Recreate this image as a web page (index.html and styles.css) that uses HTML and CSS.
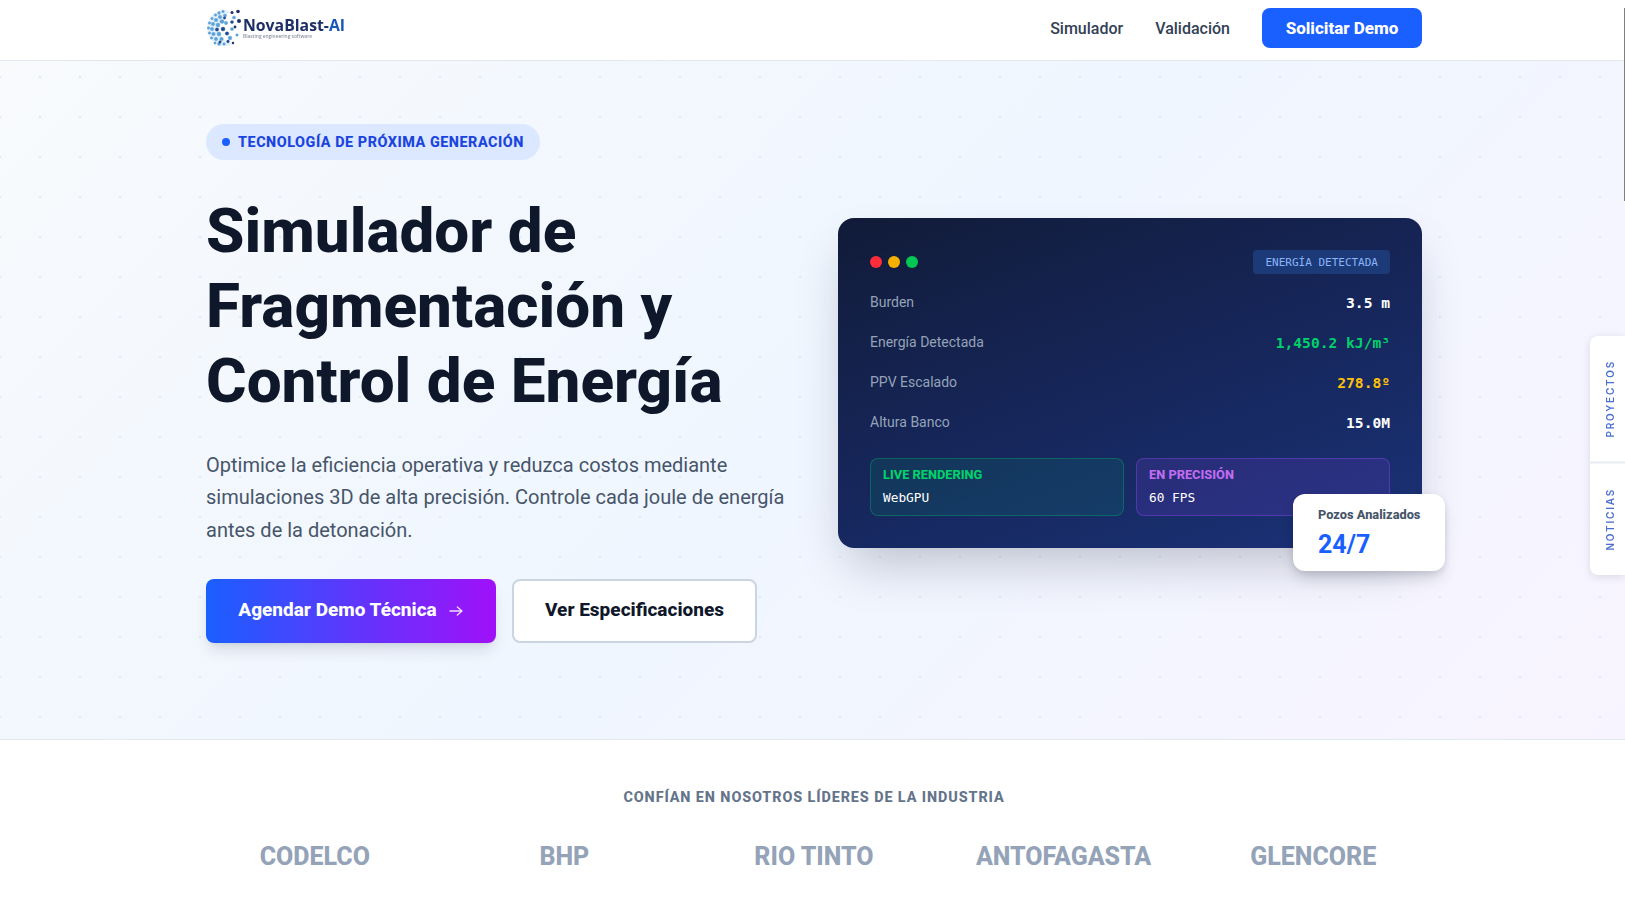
FILE: index.html
```html
<!DOCTYPE html>
<html lang="es">
<head>
<meta charset="utf-8">
<title>NovaBlast-AI</title>
<link rel="stylesheet" href="styles.css">
</head>
<body>
<header class="nav">
  <div class="wrap nav-inner">
    <a class="logo" href="#">
      <svg class="globe" viewBox="0 0 38 38" width="38" height="38" aria-hidden="true">
        <path class="globe-haze" d="M19 1C9 1 1 9 1 19s8 18 18 18c4 0 6-1 8-2-8-2-14-9-14-16S17 6 25 3c-2-1-4-2-6-2z"/>
        <g class="dots-mid">
          <circle cx="13" cy="4" r="1.4"/><circle cx="17" cy="2.5" r="1.3"/><circle cx="9.5" cy="6" r="1.3"/><circle cx="14" cy="8" r="1.8"/><circle cx="19" cy="6.5" r="1.6"/>
          <circle cx="6" cy="9.5" r="1.3"/><circle cx="10" cy="11" r="1.8"/><circle cx="16" cy="12.5" r="2.1"/><circle cx="3.5" cy="14" r="1.3"/><circle cx="7" cy="15" r="1.8"/>
          <circle cx="12" cy="16" r="2"/><circle cx="2.5" cy="19" r="1.3"/><circle cx="6" cy="20" r="1.7"/><circle cx="3.5" cy="24" r="1.3"/><circle cx="7.5" cy="25" r="1.8"/>
          <circle cx="13" cy="25" r="2"/><circle cx="5.5" cy="29" r="1.3"/><circle cx="10" cy="30" r="1.7"/><circle cx="15.5" cy="30" r="1.8"/><circle cx="9" cy="34" r="1.2"/>
          <circle cx="13" cy="35" r="1.5"/><circle cx="18" cy="35" r="1.3"/><circle cx="24" cy="29" r="1.9"/><circle cx="31" cy="26" r="1.3"/><circle cx="20" cy="14" r="1.7"/>
          <circle cx="28" cy="8.5" r="1.6"/><circle cx="26" cy="20" r="1.6"/>
        </g>
        <g class="dots-deep">
          <circle cx="11" cy="20.5" r="1.7"/><circle cx="17" cy="20" r="2"/><circle cx="21" cy="24.5" r="1.8"/><circle cx="18.5" cy="9" r="1.3"/><circle cx="22" cy="32.5" r="1.4"/>
          <circle cx="14" cy="33" r="1.3"/><circle cx="26" cy="13" r="1.6"/>
        </g>
        <g class="dots-navy">
          <circle cx="26" cy="3.5" r="1.5"/><circle cx="32" cy="2.5" r="1.8"/><circle cx="33" cy="12" r="2"/><circle cx="29" cy="18" r="1.4"/><circle cx="27" cy="34" r="1.2"/>
        </g>
      </svg>
      <span class="logo-text">
        <span class="logo-name">NovaBlast-<b>AI</b></span>
        <span class="logo-tag">Blasting engineering software</span>
      </span>
    </a>
    <nav class="nav-links">
      <a href="#">Simulador</a>
      <a href="#">Validación</a>
      <a class="nav-cta" href="#">Solicitar Demo</a>
    </nav>
  </div>
</header>

<main>
  <section class="hero">
    <div class="wrap hero-grid">
      <div class="hero-copy">
        <div class="badge"><span class="badge-dot"></span>TECNOLOGÍA DE PRÓXIMA GENERACIÓN</div>
        <h1>Simulador de Fragmentación y Control de Energía</h1>
        <p class="lead">Optimice la eficiencia operativa y reduzca costos mediante simulaciones 3D de alta precisión. Controle cada joule de energía antes de la detonación.</p>
        <div class="actions">
          <a class="btn btn-primary" href="#">Agendar Demo Técnica
            <svg viewBox="0 0 24 24" width="16" height="16" fill="none" stroke="currentColor" stroke-width="2" stroke-linecap="round" stroke-linejoin="round" aria-hidden="true"><path d="M3 12h18M14 6l7 6-7 6"/></svg>
          </a>
          <a class="btn btn-outline" href="#">Ver Especificaciones</a>
        </div>
      </div>
      <div class="panel-holder">
        <div class="panel">
          <div class="panel-top">
            <div class="lights"><i class="red"></i><i class="amber"></i><i class="green"></i></div>
            <span class="panel-tag">ENERGÍA DETECTADA</span>
          </div>
          <dl class="stats">
            <div class="stat"><dt>Burden</dt><dd>3.5 m</dd></div>
            <div class="stat"><dt>Energía Detectada</dt><dd class="v-green">1,450.2 kJ/m³</dd></div>
            <div class="stat"><dt>PPV Escalado</dt><dd class="v-amber">278.8º</dd></div>
            <div class="stat"><dt>Altura Banco</dt><dd>15.0M</dd></div>
          </dl>
          <div class="chips">
            <div class="chip chip-green"><strong>LIVE RENDERING</strong><span>WebGPU</span></div>
            <div class="chip chip-purple"><strong>EN PRECISIÓN</strong><span>60 FPS</span></div>
          </div>
        </div>
        <div class="float-card">
          <span class="float-label">Pozos Analizados</span>
          <span class="float-value">24/7</span>
        </div>
      </div>
    </div>
  </section>

  <section class="trust">
    <h2 class="wrap">CONFÍAN EN NOSOTROS LÍDERES DE LA INDUSTRIA</h2>
    <div class="wrap trust-grid">
      <span>CODELCO</span><span>BHP</span><span>RIO TINTO</span><span>ANTOFAGASTA</span><span>GLENCORE</span>
    </div>
  </section>
</main>

<aside class="side-tabs">
  <a href="#">PROYECTOS</a>
  <a href="#">NOTICIAS</a>
</aside>
<div class="scroll-thumb"></div>
</body>
</html>
```
FILE: styles.css
```css
* { box-sizing: border-box; }
html, body { margin: 0; padding: 0; height: 100%; overflow: hidden; }
body { font-family: Roboto, "Liberation Sans", sans-serif; color: #0f172a; background: #fff; }
a { text-decoration: none; color: inherit; }

.wrap { width: 1216px; margin-left: 206px; }

.nav { height: 61px; background: #fff; border-bottom: 1px solid #e2e8f0; }
.nav-inner { height: 60px; padding-bottom: 4px; display: flex; align-items: center; justify-content: space-between; }
.logo { display: flex; align-items: center; margin-top: -1px; }
.globe { display: block; filter: blur(.35px); }
.globe-haze { fill: #a9cdea; opacity: .3; }
.dots-mid { fill: #5aa2d8; stroke: #5aa2d8; stroke-width: .4; }
.dots-deep { fill: #1e4a96; stroke: #1e4a96; stroke-width: .3; }
.dots-navy { fill: #1d2f66; }
.logo-text { display: flex; flex-direction: column; margin-left: -1px; filter: blur(.25px); }
.logo-name { font-family: "Open Sans", sans-serif; font-size: 15.8px; font-weight: 700; color: #1d2f66; line-height: 17px; }
.logo-name b { font-weight: 700; color: #1a56b8; }
.logo-tag { font-family: "Open Sans", sans-serif; font-size: 4.8px; font-weight: 600; color: #8a93a3; line-height: 5px; }

.nav-links { display: flex; align-items: center; gap: 32px; font-size: 16px; font-weight: 500; color: #334155; }
.nav-cta { width: 160px; height: 40px; display: flex; align-items: center; justify-content: center; border-radius: 8px; background: #1a5fff; color: #fff; font-size: 17px; font-weight: 800; }

.hero {
  height: 679px;
  border-bottom: 1px solid #e2e8f0;
  background:
    radial-gradient(circle, #e2e8f0 1px, transparent 1.2px) -20px -4px / 40px 40px,
    linear-gradient(135deg, #f8fafc 0%, #eff6ff 50%, #f8f4ff 100%);
}
.hero-grid { display: grid; grid-template-columns: minmax(0, 1fr) 584px; column-gap: 48px; align-items: start; }
.hero-copy { padding-top: 63px; }
.badge { display: inline-flex; align-items: center; height: 36px; padding: 0 16px; border-radius: 18px; background: #dbe8ff; color: #1a44e0; font-size: 14.4px; font-weight: 800; letter-spacing: .53px; }
.badge-dot { width: 8px; height: 8px; border-radius: 50%; background: #1a5fff; margin-right: 8px; }
h1 { margin: 33px 0 0; max-width: 540px; font-size: 62px; line-height: 75px; font-weight: 800; color: #0f172a; }
.lead { margin: 31px 0 0; width: 590px; font-size: 20px; line-height: 32.3px; color: #475569; }
.actions { display: flex; gap: 16px; margin-top: 33px; }
.btn { height: 64px; padding-bottom: 2px; display: inline-flex; align-items: center; justify-content: center; border-radius: 8px; font-size: 19px; font-weight: 800; }
.btn-primary { width: 290px; gap: 11px; color: #fff; background: linear-gradient(90deg, #1a5fff, #a010f8); box-shadow: 0 10px 15px -3px rgba(15,23,42,.12), 0 4px 6px -4px rgba(15,23,42,.1); }
.btn-primary svg { opacity: .85; margin-top: 2px; }
.btn-outline { width: 245px; background: #fff; border: 2px solid #cbd5e1; color: #0f172a; }

.panel-holder { position: relative; padding-top: 157px; }
.panel { height: 330px; padding: 32px; border-radius: 16px; background: linear-gradient(160deg, #111b38 0%, #16265a 50%, #1a3278 100%); box-shadow: 0 25px 50px -12px rgba(15,23,42,.25); color: #fff; }
.panel-top { display: flex; align-items: center; justify-content: space-between; height: 24px; }
.lights { display: flex; gap: 6px; }
.lights i { width: 12px; height: 12px; border-radius: 50%; display: block; }
.red { background: #ff2d3a; }
.amber { background: #f5b000; }
.green { background: #00c853; }
.panel-tag { height: 24px; padding: 0 12px; display: flex; align-items: center; border-radius: 4px; background: #1c3a78; color: #8ab4f8; font-family: "DejaVu Sans Mono", monospace; font-size: 11px; }
.stats { margin: 8px 0 0; }
.stat { height: 40px; display: flex; align-items: center; justify-content: space-between; }
dt { font-size: 14px; color: #94a3b8; }
dd { margin: 0; font-family: "DejaVu Sans Mono", monospace; font-size: 14.6px; font-weight: 700; color: #fff; }
.v-green { color: #00d26a; }
.v-amber { color: #ffc107; }
.chips { display: grid; grid-template-columns: 1fr 1fr; gap: 12px; margin-top: 16px; }
.chip { height: 58px; padding: 9px 12px 0; border-radius: 8px; display: flex; flex-direction: column; border: 1px solid; }
.chip strong { font-size: 12.8px; font-weight: 800; line-height: 14px; }
.chip span { font-family: "DejaVu Sans Mono", monospace; font-size: 12.8px; line-height: 18px; color: #fff; margin-top: 7px; }
.chip-green { background: rgba(0,210,106,.1); border-color: rgba(0,210,106,.3); }
.chip-green strong { color: #00d26a; }
.chip-purple { background: rgba(147,70,247,.14); border-color: rgba(147,70,247,.4); }
.chip-purple strong { color: #c06cf0; }

.float-card { position: absolute; left: 455px; top: 433px; width: 152px; height: 77px; padding: 13px 25px; border-radius: 12px; background: #fff; box-shadow: 0 10px 15px -3px rgba(15,23,42,.15), 0 2px 6px rgba(15,23,42,.1); display: flex; flex-direction: column; }
.float-label { font-size: 12.8px; font-weight: 800; color: #475569; line-height: 16px; white-space: nowrap; }
.float-value { font-size: 25px; font-weight: 700; color: #1a5fff; line-height: 30px; margin-top: 7px; }

.trust { background: #fff; padding-top: 48px; text-align: center; }
.trust h2 { margin-top: 0; margin-bottom: 0; font-size: 14.4px; line-height: 20px; font-weight: 800; letter-spacing: .9px; color: #64748b; }
.trust-grid { display: grid; grid-template-columns: repeat(5, 1fr); margin-top: 33px; gap: 32px; font-size: 25px; font-weight: 800; color: #94a3b8; line-height: 32px; }

.side-tabs { position: fixed; right: 0; top: 336px; width: 35px; background: #fff; border-radius: 8px 0 0 8px; box-shadow: 0 2px 8px rgba(15,23,42,.12); display: flex; flex-direction: column; }
.side-tabs a { padding: 24px 4px 24px 0; display: flex; align-items: center; justify-content: center; writing-mode: vertical-rl; transform: rotate(180deg); font-size: 10px; font-weight: 600; letter-spacing: 1.8px; color: #4a6fd0; font-family: Inter, sans-serif; }
.side-tabs a:first-child { border-top: 2px solid #e8ecf2; }
.side-tabs a:last-child { padding-top: 25px; }

.scroll-thumb { position: fixed; right: 0; top: 8px; width: 1px; height: 193px; background: #808080; }
```
